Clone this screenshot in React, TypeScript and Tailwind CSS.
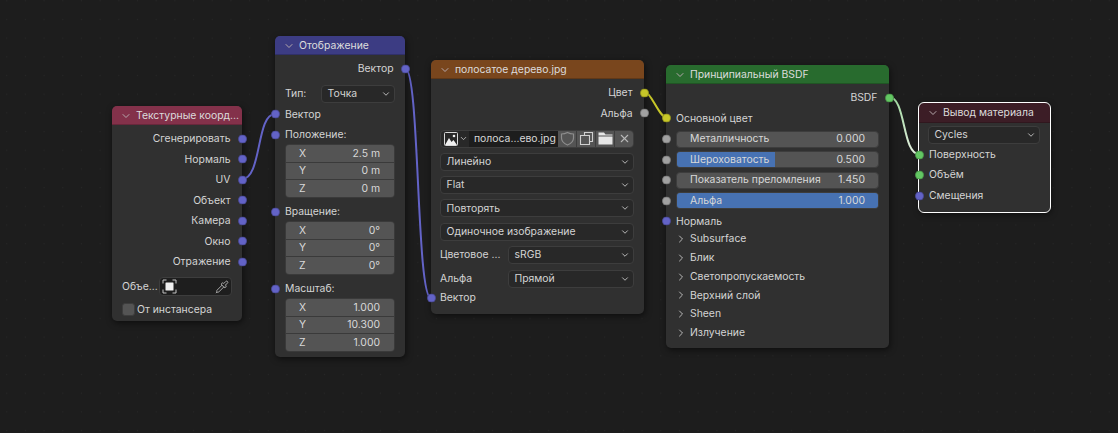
import type { ReactNode } from "react"
import { ChevronDown, ChevronRight, X, Pipette } from "lucide-react"

const PURPLE = "#6363c7"
const YELLOW = "#c7c729"
const GRAY = "#a1a1a1"
const GREEN = "#63c763"

function Socket({ side, color }: { side: "left" | "right"; color: string }) {
  return (
    <span
      className={`absolute top-1/2 -translate-y-1/2 w-[9px] h-[9px] rounded-full border border-black/25 ${side === "left" ? "left-[-4.5px]" : "right-[-4.5px]"}`}
      style={{ backgroundColor: color }}
    />
  )
}

function Row({ children, left, right, className = "" }: { children?: ReactNode; left?: string; right?: string; className?: string }) {
  return (
    <div className={`relative flex items-center h-[20.5px] pl-[10px] pr-[11.5px] ${className}`}>
      {left && <Socket side="left" color={left} />}
      {children}
      {right && <Socket side="right" color={right} />}
    </div>
  )
}

function Header({ title, className = "" }: { title: string; className?: string }) {
  return (
    <div className={`flex items-center h-[19px] pl-[8px] gap-[4px] text-[#dcdcdc] rounded-t-[5px] whitespace-nowrap shadow-[inset_0_-1px_0_rgba(0,0,0,0.2)] ${className}`}>
      <ChevronDown size={12} className="text-[#b5a8ac] shrink-0" />
      <span>{title}</span>
    </div>
  )
}

function Dropdown({ label, className = "" }: { label: string; className?: string }) {
  return (
    <div className={`flex items-center justify-between h-[18px] pl-[5.5px] pr-[3px] rounded-[4px] bg-[#282828] border border-[#3d3d3d] text-[#d4d4d4] ${className}`}>
      <span>{label}</span>
      <ChevronDown size={10} className="text-[#d4d4d4]" />
    </div>
  )
}

function VectorGroup({ values }: { values: [string, string, string] }) {
  return (
    <div className="flex flex-col gap-px mx-[10px] -mt-[1px] rounded-[4px] overflow-hidden border border-[#3a3a3a] bg-[#3a3a3a]">
      {values.map((v, i) => (
        <div key={i} className="flex items-center justify-between h-[16.5px] pl-[13px] pr-[14px] bg-[#545454] text-[#d8d8d8]">
          <span>{"XYZ"[i]}</span>
          <span>{v}</span>
        </div>
      ))}
    </div>
  )
}

function Slider({ label, value, fill, left }: { label: string; value: string; fill?: string; left: string }) {
  return (
    <div className="relative h-[17px] mb-[3.5px]">
      <Socket side="left" color={left} />
      <div className="absolute left-[10px] right-[10px] top-0 h-[17px] rounded-[4px] bg-[#545454] overflow-hidden border border-[#3d3d3d] flex items-center justify-between px-[13px] text-[#d8d8d8]">
        {fill && <div className={`absolute left-0 top-0 bottom-0 bg-[#4772b3] ${fill}`} />}
        <span className="relative">{label}</span>
        <span className="relative">{value}</span>
      </div>
    </div>
  )
}

function Panel({ label }: { label: string }) {
  return (
    <div className="flex items-center h-[18.8px] pl-[9px] gap-[3px] text-[#d4d4d4]">
      <ChevronRight size={12} className="text-[#b8b8b8]" />
      <span>{label}</span>
    </div>
  )
}

function Wires() {
  return (
    <svg className="absolute inset-0" width={1118} height={433} fill="none">
      <defs>
        <linearGradient id="bsdf" x1="0" y1="0" x2="0" y2="1">
          <stop offset="0" stopColor="#a0d8a0" />
          <stop offset="1" stopColor="#e4efdf" />
        </linearGradient>
      </defs>
      <path d="M242 179C262 179 256 114 275 114" stroke={PURPLE} strokeWidth={2} />
      <path d="M405 68C420 68 416 298 431 298" stroke={PURPLE} strokeWidth={2} />
      <path d="M645 92C651 92 659 117 666 117" stroke={YELLOW} strokeWidth={2} />
      <path d="M889 97C906 97 902 154 919 154" stroke="url(#bsdf)" strokeWidth={2} />
    </svg>
  )
}

const nodeBase = "absolute rounded-[5px] bg-[#303030] text-[10.4px] text-[#d4d4d4] shadow-[1px_2px_6px_rgba(0,0,0,0.55)]"

export default function App() {
  return (
    <div className="relative w-[1118px] h-[433px] overflow-hidden bg-[#1d1d1d] bg-[radial-gradient(circle,#272727_0.8px,transparent_1px)] bg-[size:18.7px_18.7px] bg-[position:-2.65px_-8.65px] font-['Inter','Noto_Sans',sans-serif]">
      <Wires />

      <div className={`${nodeBase} left-[112px] top-[106px] w-[130px] h-[215px]`}>
        <Header title="Текстурные коорд..." className="bg-[#83314a]" />
        <div className="pt-[3.6px] text-right">
          {["Сгенерировать", "Нормаль", "UV", "Объект", "Камера", "Окно", "Отражение"].map((l) => (
            <Row key={l} right={PURPLE} className="justify-end">{l}</Row>
          ))}
        </div>
        <div className="flex items-center h-[19px] mt-[5.4px] pl-[10px] pr-[10px]">
          <span className="w-[37px] whitespace-nowrap">Объе...</span>
          <div className="flex-1 flex items-center justify-between h-[19px] px-[2px] rounded-[4px] bg-[#1e1e1e] border border-[#3d3d3d]">
            <svg width="15" height="15" viewBox="0 0 15 15" fill="none">
              <path d="M1 4.5V1H4.5M10.5 1H14V4.5M14 10.5V14H10.5M4.5 14H1V10.5" stroke="#c4c4c4" strokeWidth="1" />
              <rect x="3.5" y="3.5" width="8" height="8" rx="0.5" fill="#f0f0f0" />
            </svg>
            <Pipette size={14} strokeWidth={1.6} className="text-[#b0b0b0]" />
          </div>
        </div>
        <div className="flex items-center h-[14px] mt-[6px] pl-[10px] gap-[2px]">
          <span className="w-[13px] h-[13px] rounded-[3px] bg-[#545454] border border-[#3d3d3d]" />
          <span>От инстансера</span>
        </div>
      </div>

      <div className={`${nodeBase} left-[275px] top-[36px] w-[130px] h-[321px]`}>
        <Header title="Отображение" className="bg-[#3c3c83]" />
        <Row right={PURPLE} className="justify-end mt-[3.7px]">Вектор</Row>
        <div className="flex items-center h-[18px] mt-[6px] pl-[10px] pr-[10px]">
          <span className="w-[36px]">Тип:</span>
          <Dropdown label="Точка" className="flex-1" />
        </div>
        <Row left={PURPLE} className="mt-[1px]">Вектор</Row>
        <Row left={PURPLE}>Положение:</Row>
        <VectorGroup values={["2.5 m", "0 m", "0 m"]} />
        <Row left={PURPLE} className="mt-[4px]">Вращение:</Row>
        <VectorGroup values={["0°", "0°", "0°"]} />
        <Row left={PURPLE} className="mt-[4px]">Масштаб:</Row>
        <VectorGroup values={["1.000", "10.300", "1.000"]} />
      </div>

      <div className={`${nodeBase} left-[431px] top-[60px] w-[213px] h-[254px]`}>
        <Header title="полосатое дерево.jpg" className="bg-[#79461d]" />
        <Row right={YELLOW} className="justify-end mt-[3.6px]">Цвет</Row>
        <Row right={GRAY} className="justify-end">Альфа</Row>
        <div className="flex items-center h-[18px] ml-[9px] mr-[10px] mt-[6.4px] rounded-[4px] overflow-hidden bg-[#282828] border border-[#3d3d3d]">
          <div className="flex items-center w-[28px] h-full pl-[3px] gap-[1px]">
            <svg width="14" height="14" viewBox="0 0 14 14" fill="none">
              <rect x="0.5" y="0.5" width="13" height="13" rx="1" stroke="#d8d8d8" />
              <path d="M1 13L5 6L7.5 10L9.5 8L13 13Z" fill="#f0f0f0" />
              <circle cx="10" cy="4" r="1.3" fill="#f0f0f0" />
            </svg>
            <ChevronDown size={9} className="text-[#d4d4d4]" />
          </div>
          <div className="flex-1 flex items-center h-full pl-[5px] bg-[#1d1d1d] text-[#d8d8d8] whitespace-nowrap">полоса...ево.jpg</div>
          <div className="flex items-center justify-center w-[19px] h-full bg-[#545454] border-r border-[#3d3d3d]">
            <svg width="15" height="15" viewBox="0 0 15 15" fill="none" stroke="#8d8d8d" strokeWidth="1.2">
              <path d="M7.5 1.5C9.5 2.6 11.5 3 13.5 3V7C13.5 10 11 12.5 7.5 14C4 12.5 1.5 10 1.5 7V3C3.5 3 5.5 2.6 7.5 1.5Z" />
            </svg>
          </div>
          <div className="flex items-center justify-center w-[19px] h-full bg-[#545454] border-r border-[#3d3d3d]">
            <svg width="15" height="15" viewBox="0 0 15 15" fill="none" stroke="#d0d0d0" strokeWidth="1.1">
              <path d="M5.5 4.5V1.5H13.5V10.5H10.5" />
              <path d="M1.5 4.5H10.5V13.5H1.5Z" />
            </svg>
          </div>
          <div className="flex items-center justify-center w-[19px] h-full bg-[#545454] border-r border-[#3d3d3d]">
            <svg width="15" height="13" viewBox="0 0 15 13" fill="#e6e6e6">
              <path d="M0.5 0.5H6L7.5 2.5H14.5V3.5H0.5Z" />
              <path d="M0.5 4.5H14.5V12.5H0.5Z" />
            </svg>
          </div>
          <div className="flex items-center justify-center w-[18px] h-full bg-[#545454]">
            <X size={13} className="text-[#b8b8b8]" />
          </div>
        </div>
        <div className="flex flex-col gap-[5.2px] ml-[9px] mr-[10px] mt-[5px]">
          <Dropdown label="Линейно" />
          <Dropdown label="Flat" />
          <Dropdown label="Повторять" />
          <Dropdown label="Одиночное изображение" />
        </div>
        <div className="flex items-center h-[18px] ml-[9px] mr-[10px] mt-[5px]">
          <span className="w-[68px] whitespace-nowrap">Цветовое ...</span>
          <Dropdown label="sRGB" className="flex-1" />
        </div>
        <div className="flex items-center h-[18px] ml-[9px] mr-[10px] mt-[6.2px]">
          <span className="w-[68px]">Альфа</span>
          <Dropdown label="Прямой" className="flex-1" />
        </div>
        <Row left={PURPLE} className="!pl-[9px]">Вектор</Row>
      </div>

      <div className={`${nodeBase} left-[666px] top-[65px] w-[223px] h-[283px]`}>
        <Header title="Принципиальный BSDF" className="bg-[#286b2e]" />
        <Row right={GREEN} className="justify-end mt-[3.6px]">BSDF</Row>
        <Row left={YELLOW}>Основной цвет</Row>
        <div className="mt-[2px]">
          <Slider left={GRAY} label="Металличность" value="0.000" />
          <Slider left={GRAY} label="Шероховатость" value="0.500" fill="w-[49%]" />
          <Slider left={GRAY} label="Показатель преломления" value="1.450" />
          <Slider left={GRAY} label="Альфа" value="1.000" fill="w-full" />
        </div>
        <Row left={PURPLE} className="-mt-[1.5px]">Нормаль</Row>
        <div className="-mt-[2px]">
          {["Subsurface", "Блик", "Светопропускаемость", "Верхний слой", "Sheen", "Излучение"].map((l) => (
            <Panel key={l} label={l} />
          ))}
        </div>
      </div>

      <div className={`${nodeBase} left-[919px] top-[103px] w-[131px] h-[109px] outline outline-1 outline-white`}>
        <Header title="Вывод материала" className="bg-[#3c1d26] h-[20px]" />
        <Dropdown label="Cycles" className="ml-[9px] mr-[10px] mt-[2.5px]" />
        <Row left={GREEN} className="mt-[1px]">Поверхность</Row>
        <Row left={GREEN}>Объём</Row>
        <Row left={PURPLE}>Смещения</Row>
      </div>
    </div>
  )
}
